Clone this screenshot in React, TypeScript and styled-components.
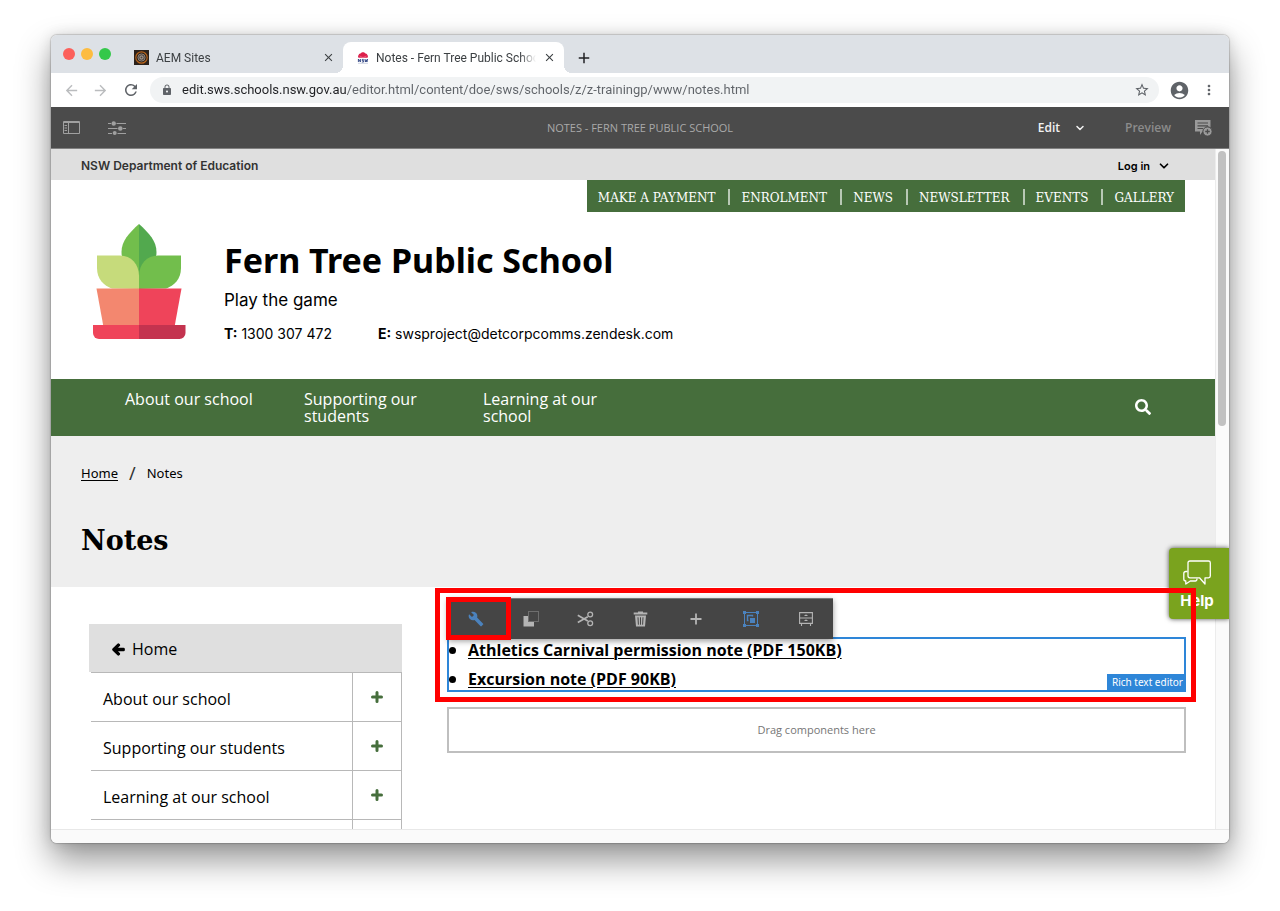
import React from "react";
import styled, { createGlobalStyle, css } from "styled-components";
import {
  MdAccountCircle,
  MdAdd,
  MdArrowBack,
  MdArrowForward,
  MdBuild,
  MdClose,
  MdLock,
  MdMoreVert,
  MdRefresh,
  MdStarBorder,
} from "react-icons/md";
import { FaArrowLeft, FaSearch } from "react-icons/fa";
import { ChevronDown } from "lucide-react";

const green = "#466e3c";
const chromeFont = `Roboto, sans-serif`;
const brandFont = `Inter, Roboto, sans-serif`;
const bodyFont = `"Open Sans", "Noto Sans", sans-serif`;
const wideFont = `"Noto Sans", "Open Sans", sans-serif`;
const slabFont = `"DejaVu Serif", serif`;

const GlobalStyle = createGlobalStyle`
  *, *::before, *::after { box-sizing: border-box; }
  body { margin: 0; background: #fff; font-family: ${bodyFont}; color: #000; }
  button { border: 0; padding: 0; background: none; font: inherit; color: inherit; cursor: pointer; }
  a { color: inherit; text-decoration: none; }
  h1, h2, p, ul { margin: 0; padding: 0; }
  svg { display: block; flex: none; }
`;

const Desktop = styled.div`
  height: 100vh;
  min-height: 600px;
  padding: 35px 51px 68px;
  display: flex;
`;

const Window = styled.div`
  flex: 1;
  min-width: 0;
  display: flex;
  flex-direction: column;
  overflow: hidden;
  border-radius: 6px;
  background: #fafafa;
  box-shadow: 0 0 1px 1px rgba(0, 0, 0, 0.16), 0 17px 34px rgba(0, 0, 0, 0.42), 0 0 14px rgba(0, 0, 0, 0.12);
`;

/* Browser chrome */

const TabStrip = styled.div`
  display: flex;
  height: 38px;
  padding: 7px 0 0 12px;
  background: #dde1e6;
  font: 12px/16px ${chromeFont};
  color: #3c4043;
`;

const Lights = styled.div`
  display: flex;
  gap: 6px;
  width: 59px;
  padding-top: 6px;
`;

const Light = styled.button<{ $color: string }>`
  width: 12px;
  height: 12px;
  border-radius: 50%;
  background: ${(p) => p.$color};
`;

const Tab = styled.div<{ $active?: boolean }>`
  display: flex;
  align-items: center;
  gap: 7px;
  width: 221px;
  padding: 0 8px 0 12px;
  ${(p) =>
    p.$active &&
    css`
      position: relative;
      padding-left: 14px;
      background: #fff;
      border-radius: 8px 8px 0 0;
      &::before,
      &::after {
        content: "";
        position: absolute;
        bottom: 0;
        width: 8px;
        height: 8px;
      }
      &::before {
        right: 100%;
        background: radial-gradient(circle at 0 0, transparent 8px, #fff 8px);
      }
      &::after {
        left: 100%;
        background: radial-gradient(circle at 100% 0, transparent 8px, #fff 8px);
      }
    `}
`;

const TabTitle = styled.span`
  flex: 1;
  overflow: hidden;
  white-space: nowrap;
  mask-image: linear-gradient(to right, #000 calc(100% - 16px), transparent);
`;

const TabClose = styled.button`
  font-size: 13px;
  color: #3c4043;
`;

const NewTab = styled.button`
  align-self: center;
  margin-left: 11px;
  font-size: 18px;
  color: #202124;
`;

const AddressRow = styled.div`
  display: flex;
  align-items: center;
  height: 34px;
  padding: 0 11px;
  background: #fff;
  color: #5f6368;
`;

const ChromeButton = styled.button<{ $muted?: boolean; $size?: number; $w?: number }>`
  display: flex;
  justify-content: center;
  width: ${(p) => p.$w ?? 30}px;
  font-size: ${(p) => p.$size ?? 17}px;
  color: ${(p) => (p.$muted ? "#babcbe" : "#5f6368")};
`;

const AddressBox = styled.div`
  flex: 1;
  display: flex;
  align-items: center;
  gap: 9px;
  height: 26px;
  margin-left: 10px;
  padding: 0 9px 0 11px;
  border-radius: 13px;
  background: #f1f3f4;
`;

const AddressInput = styled.input`
  flex: 1;
  min-width: 0;
  padding: 0;
  border: 0;
  outline: 0;
  font: 13px/18px ${chromeFont};
  color: #5f6368;
  background: linear-gradient(to right, #202124 164px, #5f6368 164px);
  background-clip: text;
  -webkit-text-fill-color: transparent;
`;

/* Editor bar */

const EditorBar = styled.div`
  display: grid;
  grid-template-columns: 1fr auto 1fr;
  align-items: center;
  height: 42px;
  padding: 0 12px;
  background: #4b4b4b;
  border-bottom: 1px solid #808080;
  color: #a9a9a9;
`;

const EditorGroup = styled.div<{ $end?: boolean }>`
  display: flex;
  align-items: center;
  ${(p) =>
    p.$end
      ? css`
          gap: 24px;
          justify-content: flex-end;
          padding-right: 5px;
        `
      : css`
          gap: 28px;
        `}
`;

const EditorTitle = styled.span`
  font-size: 11px;
  line-height: 16px;
`;

const EditorButton = styled.button<{ $selected?: boolean }>`
  display: flex;
  align-items: center;
  gap: 14px;
  margin-right: ${(p) => (p.$selected ? 15 : 0)}px;
  font-size: 12px;
  line-height: 16px;
  font-weight: 600;
  color: ${(p) => (p.$selected ? "#f2f2f2" : "#8c8c8c")};
`;

/* Page viewport */

const Viewport = styled.div`
  position: relative;
  flex: 1;
  min-height: 0;
  display: flex;
`;

const Page = styled.div`
  flex: 1;
  min-width: 0;
  overflow: hidden;
  background: #fff;
`;

const ScrollTrack = styled.div`
  width: 14px;
  padding: 2px 3px 0 2px;
  background: #fafafa;
  border-left: 1px solid #ececec;
`;

const ScrollThumb = styled.div`
  height: 275px;
  border-radius: 4px;
  background: #c1c1c1;
`;

const StatusStrip = styled.div`
  height: 14px;
  background: #fafafa;
  border-top: 1px solid #e8e8e8;
`;

const Department = styled.div`
  display: flex;
  align-items: center;
  justify-content: space-between;
  height: 31px;
  padding: 2px 44px 0 30px;
  background: #dfdfdf;
  font: 600 12px/16px ${brandFont};
  color: #333;
`;

const LogIn = styled.button`
  display: flex;
  align-items: center;
  gap: 7px;
  font-size: 11px;
  color: #000;
`;

const QuickLinks = styled.nav`
  display: flex;
  align-items: center;
  width: max-content;
  height: 32px;
  margin: 0 30px 0 auto;
  padding-top: 2px;
  background: ${green};
  font: 12px/14px ${slabFont};
  color: #fff;
`;

const QuickLink = styled.a`
  padding: 2px 13px 0 11px;
  border-left: 2px solid #b8c8b4;
  &:first-child {
    border-left: 0;
  }
  &:last-child {
    padding-right: 11px;
  }
`;

const Masthead = styled.header`
  display: flex;
  gap: 38px;
  padding: 12px 30px 27px 41px;
`;

const SchoolText = styled.div`
  padding-top: 12px;
`;

const SchoolName = styled.h1`
  font-family: ${wideFont};
  font-size: 34px;
  line-height: 48px;
`;

const Motto = styled.p`
  font: 17px/32px ${brandFont};
`;

const Contacts = styled.p`
  display: flex;
  gap: 46px;
  font: 14px/36px ${brandFont};
`;

const MainNav = styled.nav`
  display: flex;
  justify-content: space-between;
  min-height: 57px;
  padding: 12px 64px 0 74px;
  background: ${green};
  color: #fff;
`;

const MainLinks = styled.div`
  display: flex;
  gap: 49px;
`;

const MainLink = styled.a`
  width: 130px;
  font-size: 16px;
  line-height: 17px;
`;

const SearchButton = styled.button`
  align-self: flex-start;
  padding-top: 8px;
  font-size: 16px;
`;

const TitleBand = styled.div`
  padding: 27px 30px 26px;
  background: #eee;
`;

const Breadcrumb = styled.nav`
  display: flex;
  align-items: center;
  gap: 11px;
  font-family: ${wideFont};
  font-size: 13px;
  line-height: 20px;
  a {
    text-decoration: underline;
    text-underline-offset: 2px;
  }
`;

const Slash = styled.span`
  font-size: 18px;
  color: #333;
`;

const PageTitle = styled.h2`
  margin-top: 38px;
  font: bold 27px/40px ${slabFont};
`;

const Body = styled.div`
  display: grid;
  grid-template-columns: 313px minmax(0, 1fr);
  gap: 45px;
  padding: 37px 29px 0 38px;
`;

const SideNav = styled.nav`
  font-size: 16px;
  line-height: 20px;
`;

const SideHome = styled.a`
  display: flex;
  align-items: center;
  gap: 7px;
  height: 48px;
  padding: 2px 0 0 23px;
  background: #dfdfdf;
  svg {
    font-size: 13px;
    stroke: currentColor;
    stroke-width: 50px;
    overflow: visible;
  }
`;

const SideRow = styled.div`
  display: grid;
  grid-template-columns: 1fr 49px;
  height: 49px;
  margin-left: 2px;
  border-top: 1px solid #b8b8b8;
  border-right: 1px solid #b8b8b8;
`;

const SideLink = styled.a`
  padding: 16px 0 0 12px;
`;

const Expand = styled.button`
  display: flex;
  align-items: center;
  justify-content: center;
  border-left: 1px solid #b8b8b8;
  color: ${green};
`;

const Main = styled.main`
  padding-top: 13px;
`;

const TextComponent = styled.section`
  position: relative;
  border: 2px solid #2e86d8;
  height: 55px;
`;

const NoteList = styled.ul`
  list-style: none;
  padding-top: 1px;
  font-size: 16px;
  font-weight: 700;
  line-height: 20px;
  display: grid;
  gap: 9px;
`;

const Note = styled.li`
  display: flex;
  align-items: center;
  gap: 12px;
  &::before {
    content: "";
    width: 7px;
    height: 7px;
    border-radius: 50%;
    background: #000;
  }
  a {
    text-decoration: underline;
    text-decoration-thickness: 1px;
    text-underline-offset: 2px;
  }
`;

const ComponentTag = styled.span`
  position: absolute;
  right: -2px;
  bottom: -2px;
  padding: 0 3px 1px 5px;
  background: #2e86d8;
  color: #fff;
  font-family: ${wideFont};
  font-size: 10px;
  line-height: 17px;
`;

const Toolbar = styled.div`
  position: absolute;
  left: -1px;
  bottom: 51px;
  z-index: 2;
  display: flex;
  height: 41px;
  background: #454545;
  border-top: 1px solid #777;
  box-shadow: 0 2px 6px rgba(0, 0, 0, 0.4);
`;

const Tool = styled.button<{ $accent?: boolean }>`
  display: flex;
  align-items: center;
  justify-content: center;
  width: 55px;
  color: ${(p) => (p.$accent ? "#4b82bd" : "#b4b4b4")};
`;

const OuterFrame = styled.div`
  position: absolute;
  inset: -51px -12px -12px -14px;
  z-index: 5;
  border: 5px solid #f00;
  pointer-events: none;
`;

const InnerFrame = styled.div`
  position: absolute;
  top: -42px;
  left: -3px;
  width: 65px;
  height: 43px;
  z-index: 6;
  border: 5px solid #f00;
  pointer-events: none;
`;

const DropZone = styled.div`
  margin-top: 15px;
  height: 46px;
  border: 2px solid #bfbfbf;
  display: flex;
  align-items: center;
  justify-content: center;
  font-size: 11px;
  line-height: 16px;
  color: #767676;
`;

const HelpButton = styled.button`
  position: absolute;
  right: 0;
  top: 399px;
  z-index: 3;
  display: flex;
  flex-direction: column;
  align-items: center;
  gap: 8px;
  width: 60px;
  height: 71px;
  padding: 12px 4px 0 0;
  border-radius: 4px 0 0 4px;
  background: #7aa31e;
  color: #fff;
  box-shadow: 0 0 5px rgba(0, 0, 0, 0.7);
  font: 700 15px/16px ${brandFont};
`;

const AemFavicon = () => (
  <svg width="15" height="15" viewBox="0 0 15 15">
    <rect width="15" height="15" fill="#2b211b" />
    <circle cx="7.5" cy="7.5" r="5.7" fill="none" stroke="#b8651c" strokeWidth="1.2" />
    <circle cx="7.5" cy="7.5" r="3.6" fill="#4a4442" stroke="#9a8a7e" strokeWidth=".9" />
    <rect x="6" y="6" width="3" height="3" rx="1" fill="none" stroke="#c4b3a4" strokeWidth=".9" />
  </svg>
);

const NswFavicon = () => (
  <svg width="12" height="13" viewBox="0 0 12 13">
    <path d="M1.500 6.800C.9 5.800.9 4.600 1.700 3.900 1.900 2.900 2.700 2.400 3.600 2.400 4.200 1.500 5 1.200 6 1.200s1.800.3 2.400 1.200c.9 0 1.700.5 1.900 1.500.8.7.8 1.900.2 2.900z" fill="#dc1f4b" />
    <path d="M2.500 5l3.500 1.500L9.500 5" fill="none" stroke="#f28aa3" strokeWidth=".5" />
    <path d="M1.400 11V8l2 3V8M6.700 8.400H5.200v1.200h1.400V11H4.900M7.900 8l.6 3 .7-2.300.7 2.300.7-3" fill="none" stroke="#2a3f80" strokeWidth=".9" />
    <path d="M1 12.300h10" stroke="#aab3cd" strokeWidth=".6" />
  </svg>
);

const PlantLogo = () => (
  <svg width="94" height="116" viewBox="0 0 94 116" role="img" aria-label="School logo">
    <path d="M47 0C37 9 29.500 17 29.500 28c0 12 8 22 17.500 24z" fill="#72be4c" />
    <path d="M47 0c10 9 17.500 17 17.500 28 0 12-8 22-17.500 24z" fill="#52a94e" />
    <path d="M47 65V52c0-12 8-20.500 19-20.500h23V44c0 11-7 18-15 20.500z" fill="#72be4c" />
    <path d="M47 65V52c0-12-8-20.500-19-20.500H5V44c0 11 7 18 15 20.500z" fill="#c6db7b" />
    <path d="M4.500 64.500H47V103H11.500z" fill="#f3876f" />
    <path d="M89.500 64.500H47V103h35.500z" fill="#ef445a" />
    <path d="M1 101h46v14H7a6 6 0 0 1-6-6z" fill="#ef445a" />
    <path d="M93.500 101H47v14h40.500a6 6 0 0 0 6-6z" fill="#c4334f" />
  </svg>
);

const SidePanelIcon = () => (
  <svg width="17" height="13" viewBox="0 0 17 13" fill="none" stroke="#a0a0a0">
    <path d="M.5.5h16v12H.5zM.5 1.500h16M5.500 1v11.500M1.500 4.500H4M1.500 7H4M1.500 9.500H4" />
  </svg>
);

const SlidersIcon = () => (
  <svg width="18" height="14" viewBox="0 0 18 14" fill="#a0a0a0" stroke="#a0a0a0">
    <path d="M0 2.500h3M8.500 2.500H18M0 7.500h9.500M15 7.500h3M0 12.500h4M9.500 12.500H18" />
    <circle cx="5.700" cy="2.500" r="2.200" stroke="none" />
    <circle cx="12.300" cy="7.500" r="2.300" stroke="none" />
    <circle cx="6.700" cy="12" r="2" stroke="none" />
  </svg>
);

const AnnotateIcon = () => (
  <svg width="17" height="16" viewBox="0 0 17 16">
    <path d="M0 0h15.500v7.500A4.800 4.800 0 0 0 8 11.500H7.500L5 15v-3.500H0z" fill="#9a9a9a" />
    <path d="M2.500 3h10.500M2.500 5.800h10.500M2.500 8.500H8" stroke="#4b4b4b" strokeWidth="1.200" />
    <circle cx="12.500" cy="11.500" r="4.600" fill="#9a9a9a" stroke="#4b4b4b" />
    <path d="M12.500 9.200v4.600M10.200 11.500h4.600" stroke="#4b4b4b" strokeWidth="1.300" />
  </svg>
);

const CopyIcon = () => (
  <svg width="16" height="16" viewBox="0 0 16 16">
    <path d="M.5 5H5v6h6v4.500H.5z" fill="currentColor" />
    <rect x="5.500" y=".5" width="10" height="10" fill="none" stroke="currentColor" strokeDasharray="1 1" opacity=".75" />
  </svg>
);

const ScissorsIcon = () => (
  <svg width="17" height="16" viewBox="0 0 17 16" fill="none" stroke="currentColor">
    <path d="M.8 4.200 10.800 10M.8 11.500 10.800 5.800" strokeWidth="1.700" />
    <circle cx="13.200" cy="3.500" r="2.400" strokeWidth="1.300" />
    <circle cx="13.200" cy="12.300" r="2.400" strokeWidth="1.300" />
  </svg>
);

const TrashIcon = () => (
  <svg width="15" height="16" viewBox="0 0 15 16">
    <path d="M5 1.600V.5h5v1.100h4.300v2H.7v-2zM2 4.500h11L12 15.500H3z" fill="currentColor" />
    <path d="M5 6.300l.4 7.400M7.500 6.300v7.400M10 6.300l-.4 7.400" stroke="#454545" />
  </svg>
);

const PlusIcon = () => (
  <svg width="12" height="12" viewBox="0 0 12 12" stroke="currentColor" strokeWidth="1.800">
    <path d="M6 .5v11M.5 6h11" />
  </svg>
);

const ExpandIcon = () => (
  <svg width="12" height="12" viewBox="0 0 12 12" stroke="currentColor" strokeWidth="3" strokeLinecap="round">
    <path d="M6 1.500v9M1.500 6h9" />
  </svg>
);

const GroupIcon = () => (
  <svg width="16" height="16" viewBox="0 0 16 16" fill="currentColor" stroke="currentColor">
    <rect x="1.500" y="1.500" width="13" height="13" fill="none" />
    <path d="M0 0h3v3H0zM13 0h3v3h-3zM0 13h3v3H0zM13 13h3v3h-3z" stroke="none" />
    <path d="M9.500 5.500v-1h-5v5h1" fill="none" strokeWidth="1.400" />
    <rect x="7" y="7" width="5" height="5" stroke="none" />
  </svg>
);

const CabinetIcon = () => (
  <svg width="14" height="14" viewBox="0 0 14 14" fill="none" stroke="currentColor" strokeWidth="1.100">
    <path d="M.6.6h12.800v10.800H.6zM.6 6h12.800M5.500 3.500h3M7 2.500v1.500M5.500 8.500h3M7 7.500V9M2.500 11.500v2.500M11.500 11.500v2.500" />
  </svg>
);

const ChatIcon = () => (
  <svg width="28" height="25" viewBox="0 0 28 25" fill="none" stroke="currentColor" strokeWidth="1.300" strokeLinejoin="round">
    <path d="M7 1h18.500Q27.300 1 27.300 2.800V16Q27.300 17.800 25.500 17.800H22V24l-5.500-6.200H7Q5 17.800 5 16V2.800Q5 1 7 1z" />
    <path d="M4.500 11.500H3Q.8 11.500.8 13.500v5.500Q.8 21 2.800 21v3l4.500-3h5Q14 21 14 18.500" />
  </svg>
);

const quickLinks = ["MAKE A PAYMENT", "ENROLMENT", "NEWS", "NEWSLETTER", "EVENTS", "GALLERY"];
const sections = ["About our school", "Supporting our students", "Learning at our school"];
const notes = ["Athletics Carnival permission note (PDF 150KB)", "Excursion note (PDF 90KB)"];

export default function App() {
  return (
    <Desktop>
      <GlobalStyle />
      <Window>
        <TabStrip>
          <Lights>
            <Light $color="#fc605b" aria-label="Close window" />
            <Light $color="#fdbc40" aria-label="Minimise window" />
            <Light $color="#34c84a" aria-label="Zoom window" />
          </Lights>
          <Tab>
            <AemFavicon />
            <TabTitle>AEM Sites</TabTitle>
            <TabClose aria-label="Close AEM Sites"><MdClose /></TabClose>
          </Tab>
          <Tab $active>
            <NswFavicon />
            <TabTitle>Notes - Fern Tree Public School</TabTitle>
            <TabClose aria-label="Close Notes"><MdClose /></TabClose>
          </Tab>
          <NewTab aria-label="New tab"><MdAdd /></NewTab>
        </TabStrip>

        <AddressRow>
          <ChromeButton $muted $w={18} aria-label="Back"><MdArrowBack /></ChromeButton>
          <ChromeButton $muted $w={41} aria-label="Forward"><MdArrowForward /></ChromeButton>
          <ChromeButton $w={19} $size={18} aria-label="Reload"><MdRefresh /></ChromeButton>
          <AddressBox>
            <MdLock size={12} />
            <AddressInput
              aria-label="Address"
              defaultValue="edit.sws.schools.nsw.gov.au/editor.html/content/doe/sws/schools/z/z-trainingp/www/notes.html"
            />
            <ChromeButton $w={16} $size={16} aria-label="Bookmark"><MdStarBorder /></ChromeButton>
          </AddressBox>
          <ChromeButton $w={41} $size={21} aria-label="Profile"><MdAccountCircle /></ChromeButton>
          <ChromeButton $w={18} $size={16} aria-label="Menu"><MdMoreVert /></ChromeButton>
        </AddressRow>

        <EditorBar>
          <EditorGroup>
            <EditorButton aria-label="Toggle side panel"><SidePanelIcon /></EditorButton>
            <EditorButton aria-label="Page information"><SlidersIcon /></EditorButton>
          </EditorGroup>
          <EditorTitle>NOTES - FERN TREE PUBLIC SCHOOL</EditorTitle>
          <EditorGroup $end>
            <EditorButton $selected>Edit <ChevronDown size={12} strokeWidth={3} /></EditorButton>
            <EditorButton>Preview</EditorButton>
            <EditorButton aria-label="Annotate"><AnnotateIcon /></EditorButton>
          </EditorGroup>
        </EditorBar>

        <Viewport>
          <Page>
            <Department>
              <span>NSW Department of Education</span>
              <LogIn>Log in <ChevronDown size={14} strokeWidth={3} /></LogIn>
            </Department>
            <QuickLinks aria-label="Quick links">
              {quickLinks.map((label) => (
                <QuickLink href="#" key={label}>{label}</QuickLink>
              ))}
            </QuickLinks>
            <Masthead>
              <PlantLogo />
              <SchoolText>
                <SchoolName>Fern Tree Public School</SchoolName>
                <Motto>Play the game</Motto>
                <Contacts>
                  <span><b>T:</b> 1300 307 472</span>
                  <span><b>E:</b> swsproject@detcorpcomms.zendesk.com</span>
                </Contacts>
              </SchoolText>
            </Masthead>
            <MainNav aria-label="Main">
              <MainLinks>
                {sections.map((label) => (
                  <MainLink href="#" key={label}>{label}</MainLink>
                ))}
              </MainLinks>
              <SearchButton aria-label="Search"><FaSearch /></SearchButton>
            </MainNav>
            <TitleBand>
              <Breadcrumb aria-label="Breadcrumb">
                <a href="#">Home</a>
                <Slash>/</Slash>
                <span>Notes</span>
              </Breadcrumb>
              <PageTitle>Notes</PageTitle>
            </TitleBand>
            <Body>
              <SideNav aria-label="Section">
                <SideHome href="#"><FaArrowLeft /> Home</SideHome>
                {sections.map((label) => (
                  <SideRow key={label}>
                    <SideLink href="#">{label}</SideLink>
                    <Expand aria-label={`Expand ${label}`}><ExpandIcon /></Expand>
                  </SideRow>
                ))}
                <SideRow>
                  <span />
                  <Expand aria-label="Expand" />
                </SideRow>
              </SideNav>
              <Main>
                <TextComponent>
                  <NoteList>
                    {notes.map((label) => (
                      <Note key={label}><a href="#">{label}</a></Note>
                    ))}
                  </NoteList>
                  <ComponentTag>Rich text editor</ComponentTag>
                  <Toolbar role="toolbar" aria-label="Component actions">
                    <Tool $accent aria-label="Configure"><MdBuild size={16} /></Tool>
                    <Tool aria-label="Copy"><CopyIcon /></Tool>
                    <Tool aria-label="Cut"><ScissorsIcon /></Tool>
                    <Tool aria-label="Delete"><TrashIcon /></Tool>
                    <Tool aria-label="Insert"><PlusIcon /></Tool>
                    <Tool $accent aria-label="Group"><GroupIcon /></Tool>
                    <Tool aria-label="Layout"><CabinetIcon /></Tool>
                  </Toolbar>
                  <OuterFrame />
                  <InnerFrame />
                </TextComponent>
                <DropZone>Drag components here</DropZone>
              </Main>
            </Body>
          </Page>
          <ScrollTrack>
            <ScrollThumb />
          </ScrollTrack>
          <HelpButton>
            <ChatIcon />
            Help
          </HelpButton>
        </Viewport>
        <StatusStrip />
      </Window>
    </Desktop>
  );
}
